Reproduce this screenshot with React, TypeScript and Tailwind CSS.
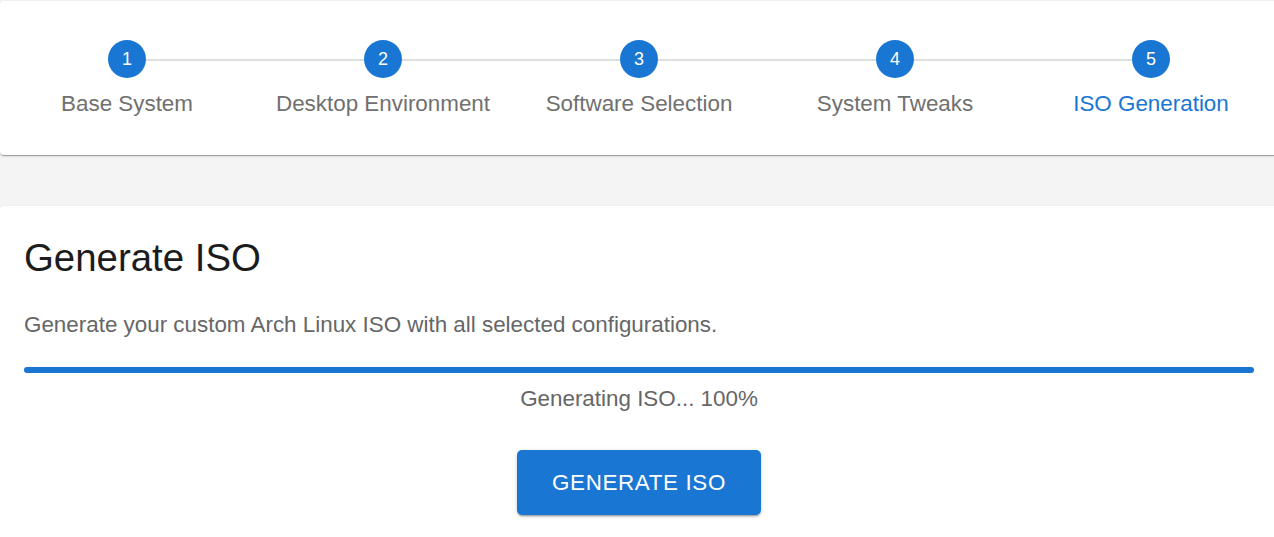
import React from "react";

const steps = [
  "Base System",
  "Desktop Environment",
  "Software Selection",
  "System Tweaks",
  "ISO Generation",
];

export default function App() {
  const active = 4;
  return (
    <div
      className="w-full h-[537px] overflow-hidden bg-[#f4f4f4]"
      style={{ fontFamily: '"Liberation Sans", Arial, sans-serif' }}
    >
      <div className="w-[1278px]">
        {/* Stepper card */}
        <div className="mt-px bg-white rounded-[4px] shadow-[0px_2px_1px_-1px_rgba(0,0,0,0.2),0px_1px_1px_0px_rgba(0,0,0,0.14),0px_1px_3px_0px_rgba(0,0,0,0.12)] pt-[39px] pb-[35px] flex justify-center">
          {steps.map((label, i) => (
            <div key={label} className="w-[256px] shrink-0 flex flex-col items-center">
              <div className="w-full flex items-center">
                <div
                  className={
                    "flex-1 h-[2px] mt-px " +
                    (i === 0 ? "bg-transparent" : "bg-[#dedede]")
                  }
                />
                <div className="w-[38px] h-[38px] rounded-full bg-[#1976d2] text-white text-[18px] flex items-center justify-center">
                  {i + 1}
                </div>
                <div
                  className={
                    "flex-1 h-[2px] mt-px " +
                    (i === steps.length - 1 ? "bg-transparent" : "bg-[#dedede]")
                  }
                />
              </div>
              <div
                className={
                  "mt-[9px] text-[22.4px] leading-[33px] whitespace-nowrap " +
                  (i === active ? "text-[#1976d2]" : "text-[#707070]")
                }
              >
                {label}
              </div>
            </div>
          ))}
        </div>

        {/* Generate card */}
        <div className="mt-[51px] bg-white rounded-[4px] shadow-[0px_2px_1px_-1px_rgba(0,0,0,0.2),0px_1px_1px_0px_rgba(0,0,0,0.14),0px_1px_3px_0px_rgba(0,0,0,0.12)] px-6 pt-[28px] pb-8 flex flex-col">
          <h1 className="text-[38.4px] leading-[47px] text-[#1c1c1c] font-normal">
            Generate ISO
          </h1>
          <p className="mt-[27px] text-[22.4px] leading-[33px] text-[#666666]">
            Generate your custom Arch Linux ISO with all selected configurations.
          </p>
          <div className="mt-[26px] h-[6px] w-full rounded-full bg-[#1976d2]" />
          <div className="mt-[9px] text-center text-[22.4px] leading-[33px] text-[#666666]">
            Generating ISO... 100%
          </div>
          <div className="mt-[35px] flex justify-center">
            <button className="w-[244px] h-[65px] rounded-[5px] bg-[#1976d2] text-white text-[22.4px] uppercase tracking-[0.63px] shadow-[0px_3px_1px_-2px_rgba(0,0,0,0.2),0px_2px_2px_0px_rgba(0,0,0,0.14),0px_1px_5px_0px_rgba(0,0,0,0.12)]">
              Generate ISO
            </button>
          </div>
        </div>
      </div>
    </div>
  );
}
